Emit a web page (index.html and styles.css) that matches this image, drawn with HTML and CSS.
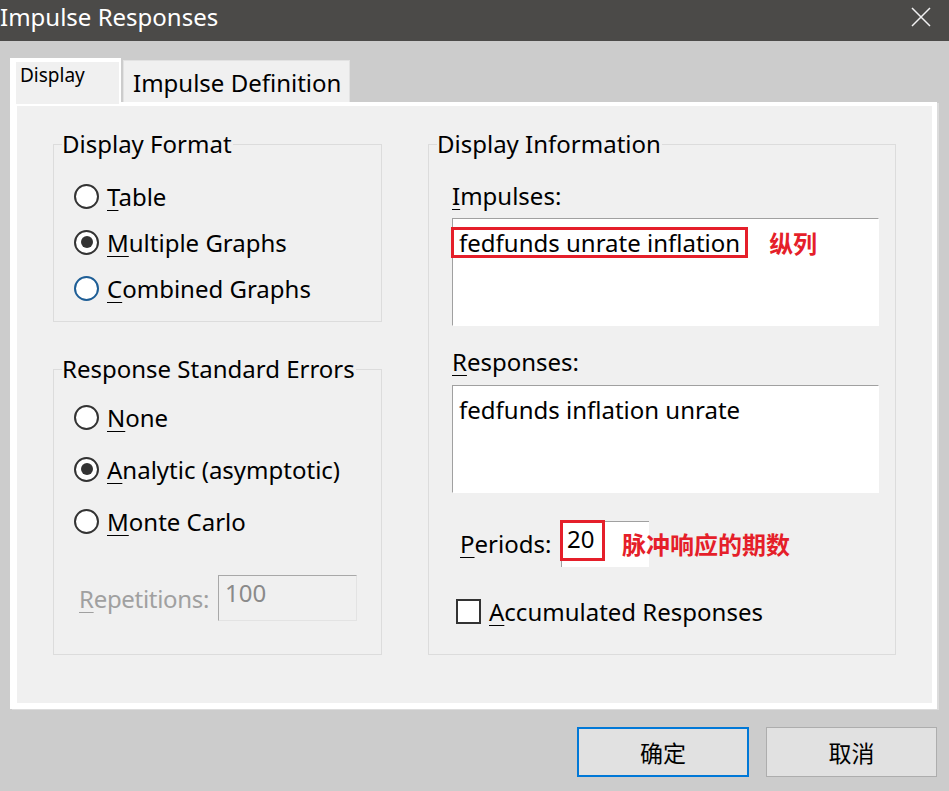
FILE: index.html
```html
<!DOCTYPE html>
<html lang="en">
<head>
<meta charset="utf-8">
<title>Impulse Responses</title>
<link rel="stylesheet" href="styles.css">
</head>
<body>
<div class="window">
  <header class="titlebar">
    <span class="title">Impulse Responses</span>
    <svg class="close" width="20" height="20" viewBox="0 0 20 20"><path d="M1 1 L19 19 M19 1 L1 19" stroke="#f2f2f2" stroke-width="1.5" fill="none"/></svg>
  </header>
  <main class="client">
    <div class="tabs">
      <div class="tab tab-active">Display</div>
      <div class="tab tab-idle">Impulse Definition</div>
    </div>
    <section class="panel">
      <div class="col-left">
        <fieldset class="group g-format">
          <legend>Display Format</legend>
          <div class="rows">
            <label class="opt opt-format"><span class="radio"></span><span><u>T</u>able</span></label>
            <label class="opt opt-format"><span class="radio checked"></span><span><u>M</u>ultiple Graphs</span></label>
            <label class="opt opt-format"><span class="radio focus"></span><span><u>C</u>ombined Graphs</span></label>
          </div>
        </fieldset>
        <fieldset class="group g-errors">
          <legend>Response Standard Errors</legend>
          <div class="rows rows-errors">
            <label class="opt opt-err"><span class="radio"></span><span><u>N</u>one</span></label>
            <label class="opt opt-err"><span class="radio checked"></span><span><u>A</u>nalytic (asymptotic)</span></label>
            <label class="opt opt-err"><span class="radio"></span><span><u>M</u>onte Carlo</span></label>
            <div class="reps">
              <span class="reps-label"><u>R</u>epetitions:</span>
              <span class="reps-box">100</span>
            </div>
          </div>
        </fieldset>
      </div>
      <fieldset class="group g-info">
        <legend>Display Information</legend>
        <div class="info">
          <div class="field-label lbl-imp"><u>I</u>mpulses:</div>
          <div class="listbox lb-imp">
            <span class="mark">fedfunds unrate inflation</span><span class="note note-col">纵列</span>
          </div>
          <div class="field-label lbl-resp"><u>R</u>esponses:</div>
          <div class="listbox lb-resp">fedfunds inflation unrate</div>
          <div class="periods">
            <span class="periods-label"><u>P</u>eriods:</span>
            <span class="periods-box"><span class="mark-box"></span>20</span>
            <span class="note note-periods">脉冲响应的期数</span>
          </div>
          <label class="check-row"><span class="checkbox"></span><span><u>A</u>ccumulated Responses</span></label>
        </div>
      </fieldset>
    </section>
    <div class="buttons">
      <button class="btn btn-default">确定</button>
      <button class="btn">取消</button>
    </div>
  </main>
</div>
</body>
</html>
```
FILE: styles.css
```css
* { box-sizing: border-box; }
html, body { margin: 0; padding: 0; }
body {
  background: #cccccc;
  font-family: "Noto Sans", "Noto Sans CJK SC", sans-serif;
  color: #000;
}
.window { width: 949px; height: 791px; overflow: hidden; }

.titlebar {
  height: 41px;
  background: #4b4a48;
  display: flex;
  justify-content: space-between;
  align-items: flex-start;
  padding-right: 18px;
}
.title {
  color: #fff;
  font-size: 24px;
  line-height: 34px;
  padding-left: 0;
}
.close { margin-top: 7px; }

.client { padding: 17px 10px 0 10px; }

.tabs {
  display: flex;
  align-items: flex-end;
  height: 46px;
  margin-bottom: -2px;
  position: relative;
  z-index: 1;
}
.tab { background: #f0f0f0; white-space: nowrap; }
.tab-active {
  width: 111px;
  height: 46px;
  border: solid #fff;
  border-width: 4px 2px 0 6px;
  font-size: 19px;
  line-height: 26px;
  padding: 0 0 0 4px;
}
.tab-idle {
  margin-left: 2px;
  margin-bottom: 2px;
  width: 227px;
  height: 42px;
  border: 1px solid #e2e2e2;
  border-bottom: none;
  font-size: 24px;
  line-height: 44px;
  padding-left: 9px;
}

.panel {
  width: 927px;
  height: 607px;
  background: #f0f0f0;
  border: solid #fff;
  border-width: 4px 5px 6px 7px;
  box-shadow: 2px 1px 0 #dcdcdc;
  display: flex;
  gap: 46px;
  padding: 26px 36px 0 36px;
}

.col-left { width: 329px; display: flex; flex-direction: column; }

.group {
  margin: 0;
  padding: 0 0 0 8px;
  border: 1px solid #dcdcdc;
  min-width: 0;
  font-size: 24px;
}
.group legend {
  padding: 0 1px 0 0;
  line-height: 24px;
  font-size: 24px;
}
.g-format { height: 190px; }
.g-errors { height: 298px; margin-top: 35px; }
.g-info { width: 468px; height: 523px; }

.rows { padding: 17px 0 0 12px; }
.rows-errors { padding-top: 10px; }
.opt { display: flex; align-items: center; gap: 8px; white-space: nowrap; }
.opt-format { height: 46px; }
.opt-err { height: 52px; }

u { text-decoration-thickness: 1px; text-underline-offset: 4px; }

.radio {
  width: 25px;
  height: 25px;
  border-radius: 50%;
  border: 2px solid #333;
  background: #fff;
  display: flex;
  align-items: center;
  justify-content: center;
  flex: none;
}
.radio.checked::after {
  content: "";
  width: 12px;
  height: 12px;
  border-radius: 50%;
  background: #333;
}
.radio.focus { border-color: #1e5e96; }

.reps {
  display: flex;
  align-items: center;
  gap: 4px;
  margin-top: 28px;
  padding-left: 5px;
  height: 46px;
}
.reps-label { color: #a0a0a0; width: 135px; white-space: nowrap; letter-spacing: -0.3px; }
.reps-box {
  width: 139px;
  height: 46px;
  border: 1px solid #e3e3e3;
  border-top-color: #a8a8a8;
  border-left-color: #a8a8a8;
  color: #8a8a8a;
  padding: 4px 0 0 6px;
  line-height: 26px;
}

.info { padding: 27px 0 0 15px; }
.field-label { line-height: 26px; height: 26px; }
.lbl-resp { margin-top: 23px; }
.listbox {
  width: 427px;
  height: 108px;
  background: #fff;
  border: 1px solid #fff;
  border-top-color: #a0a0a0;
  border-left-color: #a0a0a0;
  margin-top: 9px;
  line-height: 26px;
  white-space: nowrap;
}
.lb-imp { padding-top: 8px; display: flex; align-items: flex-start; }
.lb-resp { margin-top: 10px; padding: 11px 0 0 6px; }
.mark {
  display: inline-block;
  margin-left: -2px;
  border: 3px solid #e51f2a;
  padding: 0 5px 0 5px;
  line-height: 25px;
  height: 31px;
}
.note {
  color: #e51f2a;
  font-family: "Noto Sans CJK SC", sans-serif;
  font-weight: 700;
  font-size: 24px;
}
.note-col { margin-left: 21px; line-height: 31px; }

.periods {
  position: relative;
  display: flex;
  align-items: center;
  margin-top: 28px;
  height: 46px;
  padding-left: 8px;
}
.periods-label { width: 101px; line-height: 26px; }
.periods-box {
  position: relative;
  width: 88px;
  height: 46px;
  background: #fff;
  border-top: 1px solid #a0a0a0;
  border-left: 1px solid #a0a0a0;
  padding: 4px 0 0 5px;
  line-height: 26px;
}
.mark-box {
  position: absolute;
  left: -2px;
  top: -2px;
  width: 45px;
  height: 41px;
  border: 3px solid #e51f2a;
}
.note-periods {
  position: absolute;
  left: 170px;
  top: 6px;
  line-height: 34px;
}

.check-row {
  display: flex;
  align-items: center;
  gap: 8px;
  height: 50px;
  margin-top: 19px;
  padding-left: 4px;
}
.checkbox {
  width: 25px;
  height: 25px;
  border: 2px solid #333;
  background: #fff;
  flex: none;
}

.buttons {
  display: flex;
  justify-content: flex-end;
  gap: 17px;
  margin-top: 18px;
  padding-right: 2px;
}
.btn {
  width: 171px;
  height: 50px;
  background: #e1e1e1;
  border: 1px solid #adadad;
  font-family: "Noto Sans CJK SC", sans-serif;
  font-size: 23px;
  color: #000;
  padding: 0;
}
.btn-default { width: 172px; border: 2px solid #0078d7; }
```
